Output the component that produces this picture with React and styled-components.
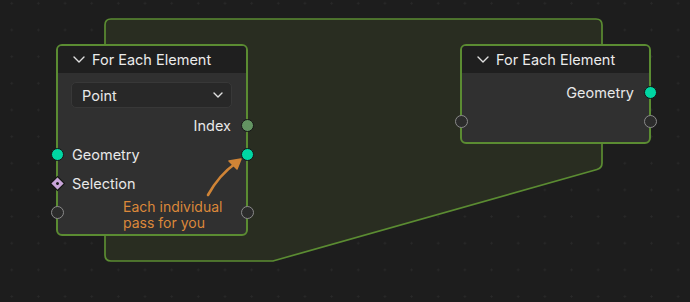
import React from "react";
import styled, { createGlobalStyle, css } from "styled-components";

const GlobalStyle = createGlobalStyle`
  html, body {
    margin: 0;
    padding: 0;
    background: #1d1d1d;
  }
`;

const Canvas = styled.div`
  position: relative;
  width: 690px;
  height: 302px;
  overflow: hidden;
  background-color: #1d1d1d;
  background-image: radial-gradient(circle, #292929 0.9px, transparent 1.3px);
  background-size: 26.67px 26.67px;
  background-position: -1.6px -10px;
  font-family: Inter, "Noto Sans", "Liberation Sans", sans-serif;
  color: #e8e8e8;
`;

const Overlay = styled.svg`
  position: absolute;
  left: 0;
  top: 0;
  pointer-events: none;
`;

const Node = styled.div`
  position: absolute;
  left: ${(p) => p.x}px;
  top: ${(p) => p.y}px;
  width: ${(p) => p.w}px;
  box-sizing: border-box;
  border: 2px solid #5b8c32;
  border-radius: 6px;
  background: #303030;
  display: flex;
  flex-direction: column;
`;

const Header = styled.div`
  height: 27px;
  display: flex;
  align-items: center;
  gap: 7px;
  padding-left: 15px;
  background: #1f1f1f;
  border-radius: 4px 4px 0 0;
  font-size: 14.5px;
  color: #ebebeb;
`;

const Body = styled.div`
  display: flex;
  flex-direction: column;
  padding: ${(p) => p.pad || "5px 0 6px"};
`;

const Dropdown = styled.div`
  height: 26px;
  margin: 0 14px 3px 13px;
  box-sizing: border-box;
  border: 1px solid #383838;
  border-radius: 5px;
  background: #282828;
  display: flex;
  align-items: center;
  justify-content: space-between;
  padding: 0 8px 0 10px;
  font-size: 14.5px;
`;

const Row = styled.div`
  position: relative;
  height: 29px;
  display: flex;
  align-items: center;
  justify-content: ${(p) => (p.right ? "flex-end" : "flex-start")};
  padding: 0 15px 0 14px;
  font-size: 14.5px;
`;

const socketColors = {
  geometry: "#00d6a3",
  field: "#639462",
};

const Socket = styled.span`
  position: absolute;
  top: 50%;
  ${(p) => (p.side === "left" ? "left: -7.5px;" : "right: -7.5px;")}
  width: 13px;
  height: 13px;
  margin-top: -6.5px;
  box-sizing: border-box;
  border-radius: 50%;
  ${(p) =>
    p.kind === "empty"
      ? css`
          border: 1.5px solid #8a8a8a;
          background: #2c2c2c;
        `
      : css`
          border: 1px solid #151515;
          background: ${socketColors[p.kind]};
        `}
`;

const Diamond = styled.span`
  position: absolute;
  top: 50%;
  left: -5px;
  width: 9px;
  height: 9px;
  margin-top: -4.5px;
  box-sizing: border-box;
  transform: rotate(45deg);
  outline: 1px solid #151515;
  background: #c9a5d9;
  display: flex;
  align-items: center;
  justify-content: center;

  &::after {
    content: "";
    width: 3px;
    height: 3px;
    border-radius: 50%;
    background: #1a1a1a;
  }
`;

const Note = styled.div`
  position: absolute;
  left: 123px;
  top: 199px;
  font-size: 14px;
  line-height: 16px;
  color: #dc883a;
`;

const Chevron = ({ w = 12, h = 7 }) => (
  <svg width={w} height={h} viewBox={`0 0 ${w} ${h}`}>
    <path
      d={`M1 1 L${w / 2} ${h - 1} L${w - 1} 1`}
      fill="none"
      stroke="#e0e0e0"
      strokeWidth="1.4"
      strokeLinecap="round"
      strokeLinejoin="round"
    />
  </svg>
);

const ForEachNode = ({ x, y, w, children, pad }) => (
  <Node x={x} y={y} w={w}>
    <Header>
      <Chevron />
      <span>For Each Element</span>
    </Header>
    <Body pad={pad}>{children}</Body>
  </Node>
);

export default function App() {
  return (
    <>
      <GlobalStyle />
      <Canvas>
        <Overlay width="690" height="302">
          <path
            d="M111 19 H596 Q602 19 602 25 V163 Q602 168 597 169.5 L273 261 H111 Q105 261 105 255 V25 Q105 19 111 19 Z"
            fill="#292d21"
            stroke="#5b8c32"
            strokeWidth="1.7"
          />
        </Overlay>

        <ForEachNode x={56} y={44} w={192} pad="9px 0 7px">
          <Dropdown>
            <span>Point</span>
            <Chevron w={10} h={6} />
          </Dropdown>
          <Row right>
            Index
            <Socket side="right" kind="field" />
          </Row>
          <Row>
            Geometry
            <Socket side="left" kind="geometry" />
            <Socket side="right" kind="geometry" />
          </Row>
          <Row>
            Selection
            <Diamond />
          </Row>
          <Row>
            <Socket side="left" kind="empty" />
            <Socket side="right" kind="empty" />
          </Row>
        </ForEachNode>

        <ForEachNode x={460} y={44} w={191} pad="5px 0 6px">
          <Row right>
            Geometry
            <Socket side="right" kind="geometry" />
          </Row>
          <Row>
            <Socket side="left" kind="empty" />
            <Socket side="right" kind="empty" />
          </Row>
        </ForEachNode>

        <Note>
          Each individual
          <br />
          pass for you
        </Note>

        <Overlay width="690" height="302">
          <path
            d="M208 195 Q219 175 236 163"
            fill="none"
            stroke="#d08436"
            strokeWidth="2.6"
            strokeLinecap="round"
          />
          <path d="M241 159 L229 161 L237 169 Z" fill="#d08436" stroke="#d08436" strokeWidth="1.5" strokeLinejoin="round" />
        </Overlay>
      </Canvas>
    </>
  );
}
